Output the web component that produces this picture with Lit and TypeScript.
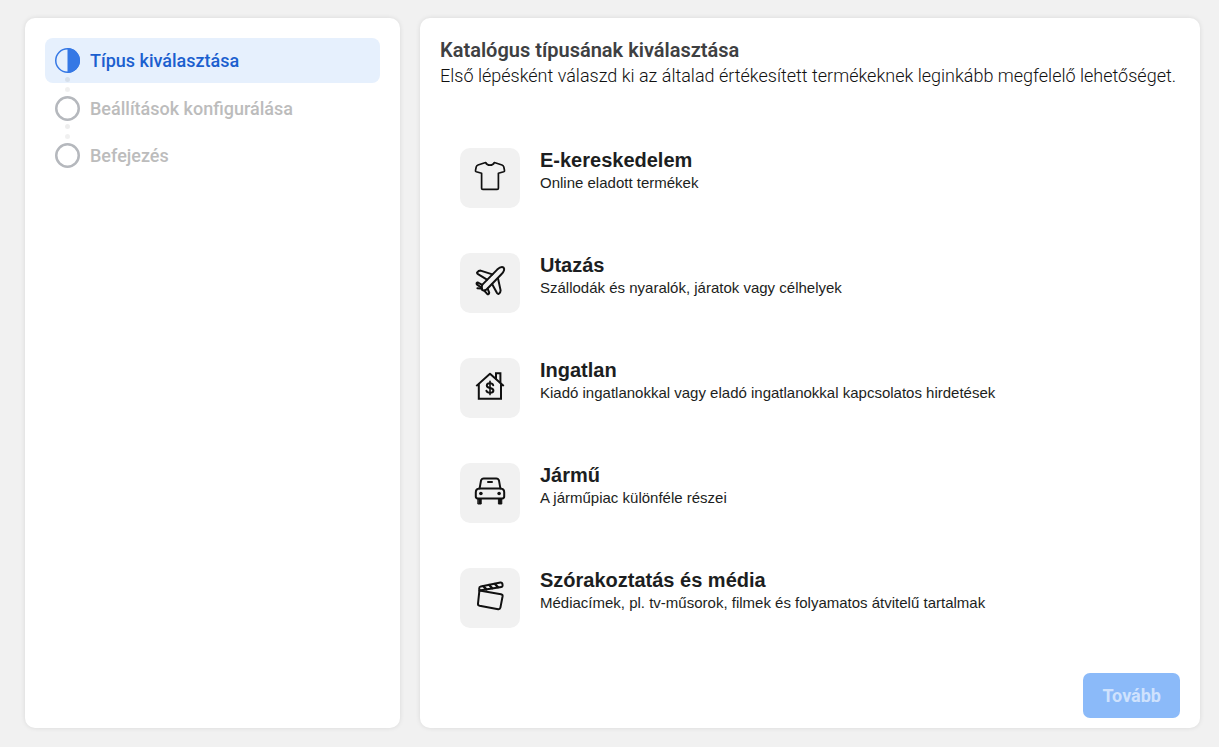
import { LitElement, html, svg, css, nothing } from "lit";
import { customElement, property, state } from "lit/decorators.js";

type IconName = "shirt" | "plane" | "house" | "car" | "clapper";

interface CatalogType {
  icon: IconName;
  title: string;
  description: string;
}

const STEPS = ["Típus kiválasztása", "Beállítások konfigurálása", "Befejezés"];

const TYPES: CatalogType[] = [
  { icon: "shirt", title: "E-kereskedelem", description: "Online eladott termékek" },
  { icon: "plane", title: "Utazás", description: "Szállodák és nyaralók, járatok vagy célhelyek" },
  { icon: "house", title: "Ingatlan", description: "Kiadó ingatlanokkal vagy eladó ingatlanokkal kapcsolatos hirdetések" },
  { icon: "car", title: "Jármű", description: "A járműpiac különféle részei" },
  { icon: "clapper", title: "Szórakoztatás és média", description: "Médiacímek, pl. tv-műsorok, filmek és folyamatos átvitelű tartalmak" },
];

const ICONS = {
  shirt: svg`
    <path d="M25.6 14.5 L18 17 Q16.6 17.5 16.2 19 L15.5 22.4 Q15.3 23.4 16.3 23.8 L21.6 25.3 V40.2 Q21.6 41.4 22.8 41.4 H37.2 Q38.4 41.4 38.4 40.2 V25.3 L43.7 23.8 Q44.7 23.4 44.5 22.4 L43.8 19 Q43.4 17.5 42 17 L34.4 14.5 Q33 17.2 30 17.2 Q27 17.2 25.6 14.5 Z" stroke-width="1.7"/>`,
  plane: svg`
    <path d="M22.4 31.6 L37.2 16.6 C39.6 14.4 42.4 13.8 43.6 14.6 C44.6 16 43.8 18.8 41.4 21.2 L26.8 36.2 Q24.4 38.2 22.4 37.2 Q20.8 34.6 22.4 31.6 Z"/>
    <path d="M32.4 21.4 L20.6 17.6 Q18.6 17.6 17 19.6 Q17 20.6 18 21.2 L27 26.6"/>
    <path d="M38 25.4 L40.6 37.4 Q40.6 39.6 38.6 41 Q37.6 41 37 40 L32.2 31.2"/>
    <path d="M22.2 31.8 L17.6 29.4 Q16.2 30 16.8 31.4 L21.4 34.6"/>
    <path d="M20.8 35.4 L17.4 35.2"/>
    <path d="M27.6 35.6 L29.2 39.6 Q29 41.4 27.4 41.2 L24.2 37.6"/>`,
  house: svg`
    <path d="M17 27.4 L30 15.8 L43 27.4" stroke-linecap="square"/>
    <path d="M18.8 26.4 V40.8 H41 V26.4" stroke-linejoin="miter"/>
    <path d="M36 20.6 V15.2 H40.4 V24.4" stroke-linejoin="miter"/>
    <path d="M33.2 27.2 Q32.6 25.2 30 25.2 Q26.8 25.2 26.8 27.6 Q26.8 29.4 30 30 Q33.4 30.6 33.4 32.6 Q33.4 34.8 30 34.8 Q27 34.8 26.4 32.8"/>
    <path d="M30 23.4 V36.6" stroke-width="1.6"/>`,
  car: svg`
    <path d="M19.6 25.4 L21 17.6 Q21.6 15.4 23.8 15.4 H36.2 Q38.4 15.4 39 17.6 L40.4 25.4"/>
    <path d="M19.6 25.4 H40.4 Q44.2 25.6 44.2 29.2 V33.6 Q44.2 35.4 42.4 35.4 H17.6 Q15.8 35.4 15.8 33.6 V29.2 Q15.8 25.6 19.6 25.4 Z"/>
    <path d="M28 19 H32"/>
    <path d="M18.2 36 H21.2 V41 H18.2 Z M38.8 36 H41.8 V41 H38.8 Z" fill="currentColor" stroke-width="1"/>
    <circle cx="20.9" cy="30.5" r="1.8" fill="currentColor" stroke="none"/>
    <circle cx="39.1" cy="30.5" r="1.8" fill="currentColor" stroke="none"/>`,
  clapper: svg`
    <path d="M19.4 22.6 L19.2 20.4 Q19.2 18.8 20.8 18.4 L40.4 14.6 Q42 14.4 42.4 15.8 L42.6 17.4 Q42.6 18.8 41.4 19 L19.4 22.6 Z"/>
    <path d="M23.4 18.2 L26.4 21.4 M29.2 17 L32.2 20.2 M35 16 L38 19.2" stroke-width="2.4"/>
    <path d="M19.4 22.6 L41 26.2 Q42.8 26.6 42.6 28.2 L40.4 39.6 Q40 41.4 38.2 41.2 L19.6 37.8 Q17.8 37.4 18 35.6 Z"/>`,
};

@customElement("step-item")
export class StepItem extends LitElement {
  @property() label = "";
  @property({ type: Boolean, reflect: true }) active = false;
  @property({ type: Boolean }) linked = false;

  static styles = css`
    :host {
      display: block;
      position: relative;
      padding: 10px 10px 9px;
      border-radius: 8px;
      color: #bcbcbc;
    }
    :host([active]) {
      padding-bottom: 10px;
      background: #e6f0fd;
      color: #1b5fcf;
    }
    .row {
      display: flex;
      align-items: center;
      gap: 10px;
      font-size: 18px;
      line-height: 25px;
      font-weight: 500;
    }
    .mark {
      flex: none;
      display: block;
      width: 25px;
      height: 25px;
    }
    .link {
      position: absolute;
      left: 20px;
      top: -9px;
      width: 5px;
      height: 15px;
    }
  `;

  render() {
    return html`
      ${this.linked
        ? html`<svg class="link" viewBox="0 0 5 15" aria-hidden="true">
            <circle cx="2.5" cy="2.5" r="2.5" fill="#000" fill-opacity=".07" />
            <circle cx="2.5" cy="12.5" r="2.5" fill="#000" fill-opacity=".06" />
          </svg>`
        : nothing}
      <div class="row">
        <svg class="mark" viewBox="0 0 25 25" aria-hidden="true">
          ${this.active
            ? svg`<circle cx="12.5" cy="12.5" r="11.75" fill="none" stroke="#3578e5" stroke-width="1.5"/>
                <path d="M12.5 0 A12.5 12.5 0 0 1 12.5 25 Z" fill="#3578e5"/>`
            : svg`<circle cx="12.5" cy="12.5" r="11.25" fill="#fff" stroke="#b5b8bd" stroke-width="2.5"/>`}
        </svg>
        <span>${this.label}</span>
      </div>
    `;
  }
}

@customElement("app-root")
export class AppRoot extends LitElement {
  @state() private selected = -1;

  static styles = css`
    :host {
      display: block;
      font-family: Roboto, "Liberation Sans", sans-serif;
    }
    .page {
      box-sizing: border-box;
      min-height: 100vh;
      display: grid;
      grid-template-columns: minmax(0, 25fr) minmax(0, 52fr);
      gap: 20px;
      padding: 18px 19px 19px 25px;
      background: #f1f1f1;
    }
    .panel {
      box-sizing: border-box;
      background: #fff;
      border-radius: 10px;
      box-shadow: 0 0 5px rgba(0, 0, 0, 0.1);
      padding: 20px;
    }
    .steps {
      list-style: none;
      margin: 0;
      padding: 0;
      display: flex;
      flex-direction: column;
      gap: 3px;
    }
    .content {
      display: flex;
      flex-direction: column;
      padding-bottom: 10px;
    }
    .heading {
      margin: 0;
      font-size: 20px;
      line-height: 24px;
      font-weight: 600;
      color: #3e4042;
    }
    .intro {
      margin: 0;
      font-size: 18px;
      line-height: 28px;
      font-weight: 300;
      color: #111;
    }
    .types {
      display: flex;
      flex-direction: column;
      gap: 45px;
      padding: 58px 20px 45px;
    }
    .type {
      display: flex;
      align-items: flex-start;
      gap: 20px;
      border: 0;
      padding: 0;
      background: none;
      font-family: "Liberation Sans", Arial, sans-serif;
      color: #1c1e21;
      text-align: left;
      cursor: pointer;
    }
    .tile {
      flex: none;
      display: block;
      width: 60px;
      height: 60px;
      border-radius: 10px;
      background: #f1f1f1;
      color: #111;
    }
    .title {
      display: block;
      font-size: 20px;
      line-height: 24px;
      font-weight: 700;
    }
    .description {
      display: block;
      font-size: 15px;
      line-height: 22px;
    }
    .next {
      margin-top: auto;
      align-self: flex-end;
      border: 0;
      border-radius: 7px;
      padding: 10px 19px;
      background: #8bbaf9;
      color: #cfe2fd;
      font-family: inherit;
      font-size: 18px;
      line-height: 25px;
      font-weight: 700;
    }
  `;

  render() {
    return html`
      <div class="page">
        <nav class="panel">
          <ol class="steps">
            ${STEPS.map(
              (label, i) => html`<li>
                <step-item .label=${label} ?active=${i === 0} ?linked=${i > 0}></step-item>
              </li>`
            )}
          </ol>
        </nav>
        <main class="panel content">
          <h1 class="heading">Katalógus típusának kiválasztása</h1>
          <p class="intro">
            Első lépésként válaszd ki az általad értékesített termékeknek leginkább megfelelő lehetőséget.
          </p>
          <div class="types">
            ${TYPES.map(
              (type, i) => html`<button
                class="type"
                type="button"
                aria-pressed=${this.selected === i ? "true" : "false"}
                @click=${() => (this.selected = i)}
              >
                <svg
                  class="tile"
                  viewBox="0 0 60 60"
                  fill="none"
                  stroke="currentColor"
                  stroke-width="2"
                  stroke-linecap="round"
                  stroke-linejoin="round"
                  aria-hidden="true"
                >
                  ${ICONS[type.icon]}
                </svg>
                <span>
                  <span class="title">${type.title}</span>
                  <span class="description">${type.description}</span>
                </span>
              </button>`
            )}
          </div>
          <button class="next" type="button" ?disabled=${this.selected < 0}>Tovább</button>
        </main>
      </div>
    `;
  }
}
